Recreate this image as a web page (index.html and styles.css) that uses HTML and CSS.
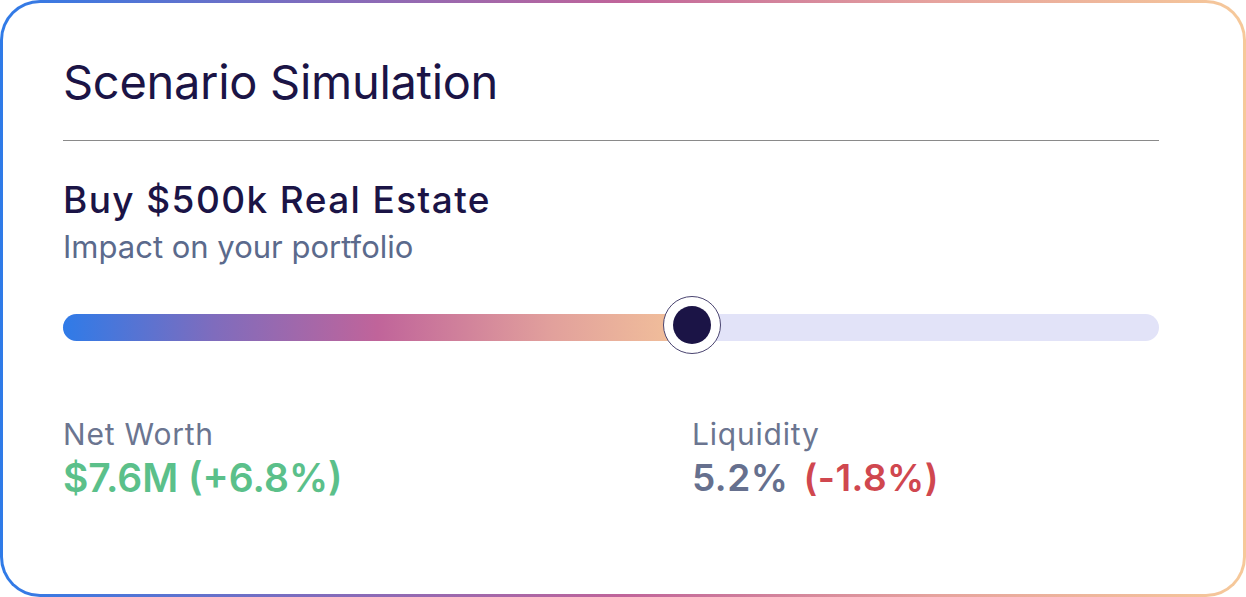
FILE: index.html
```html
<!DOCTYPE html>
<html>
<head>
<meta charset="utf-8">
<link rel="stylesheet" href="styles.css">
</head>
<body>
<div class="card">
  <h1 class="title">Scenario Simulation</h1>
  <hr class="divider">
  <div class="scenario">
    <div class="scenario-name">Buy $500k Real Estate</div>
    <div class="scenario-sub">Impact on your portfolio</div>
  </div>
  <div class="slider">
    <div class="track">
      <div class="fill" style="width: 57.4%"></div>
      <div class="thumb" style="left: 57.4%"><span class="thumb-dot"></span></div>
    </div>
  </div>
  <div class="stats">
    <div class="stat">
      <div class="stat-label">Net Worth</div>
      <div class="stat-value positive">$7.6M (+6.8%)</div>
    </div>
    <div class="stat">
      <div class="stat-label">Liquidity</div>
      <div class="stat-value stat-value-sm"><span class="neutral">5.2%</span><span class="negative">(-1.8%)</span></div>
    </div>
  </div>
</div>
</body>
</html>
```
FILE: styles.css
```css
* { box-sizing: border-box; }
html, body { margin: 0; padding: 0; background: #ffffff; }
body {
  font-family: Inter, "Noto Sans", "Liberation Sans", sans-serif;
  width: 1246px;
  height: 597px;
}
.card {
  width: 1246px;
  height: 597px;
  border: 3px solid transparent;
  border-radius: 40px;
  background:
    linear-gradient(#ffffff, #ffffff) padding-box,
    linear-gradient(90deg, #2f7be8 0%, #7f6cbd 25%, #c0649a 50%, #e6a39e 75%, #f6c99a 100%) border-box;
  padding: 49px 84px 0 60px;
  display: flex;
  flex-direction: column;
}
.title {
  margin: 0;
  font-size: 47px;
  line-height: 60px;
  font-weight: 400;
  color: #1b1446;
  letter-spacing: -0.3px;
}
.divider {
  margin: 28px 0 0 0;
  border: 0;
  height: 1px;
  background: #8a8a8a;
}
.scenario {
  padding-top: 35px;
}
.scenario-name {
  font-size: 37px;
  line-height: 48px;
  font-weight: 500;
  color: #1b1446;
  letter-spacing: 1.4px;
}
.scenario-sub {
  margin-top: 5px;
  font-size: 31px;
  line-height: 36px;
  color: #5b6a8c;
  letter-spacing: 0px;
}
.slider {
  padding-top: 49px;
}
.track {
  position: relative;
  height: 27px;
  border-radius: 14px;
  background: #e2e3f8;
}
.fill {
  height: 100%;
  border-radius: 14px 0 0 14px;
  background: linear-gradient(90deg, #2f7be8 0%, #7f6cbd 24%, #c0649a 50%, #e2a19c 78%, #f3c39a 100%);
}
.thumb {
  position: absolute;
  top: 50%;
  width: 58px;
  height: 58px;
  margin-left: -29px;
  margin-top: -32px;
  border-radius: 50%;
  background: #ffffff;
  border: 1.5px solid #4a4470;
  display: flex;
  align-items: center;
  justify-content: center;
}
.thumb-dot {
  width: 38px;
  height: 38px;
  border-radius: 50%;
  background: #1b1446;
}
.stats {
  display: grid;
  grid-template-columns: 629px 1fr;
  padding-top: 73px;
}
.stat-label {
  font-size: 30px;
  line-height: 40px;
  color: #6b7590;
  letter-spacing: 0.8px;
}
.stat-value {
  font-size: 39px;
  line-height: 48px;
  font-weight: 600;
  letter-spacing: 0px;
}
.stat-value-sm {
  font-size: 37px;
  letter-spacing: 0.5px;
}
.positive { color: #5bc08a; }
.neutral { color: #66708e; margin-right: 15px; }
.negative { color: #d0474f; }
```
